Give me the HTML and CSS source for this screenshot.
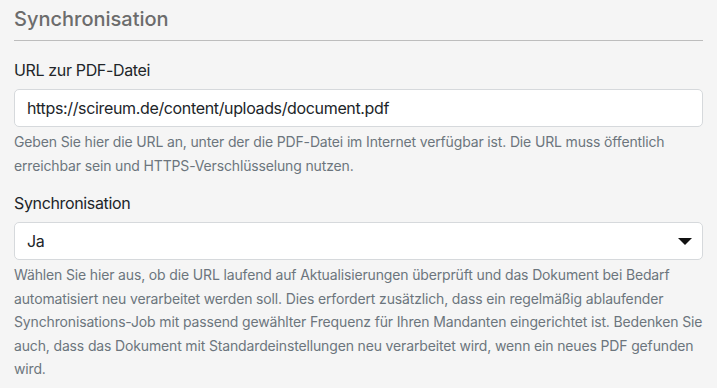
FILE: index.html
```html
<!DOCTYPE html>
<html lang="de">
<head>
    <meta charset="UTF-8">
    <meta name="viewport" content="width=device-width, initial-scale=1.0">
    <title>Synchronisation</title>
    <link rel="stylesheet" href="styles.css">
</head>
<body>
    <fieldset class="section">
        <legend class="section-title">Synchronisation</legend>

        <div class="field">
            <label class="field-label" for="pdf-url">URL zur PDF-Datei</label>
            <input class="field-input" id="pdf-url" type="text" value="https://scireum.de/content/uploads/document.pdf">
            <p class="field-help">Geben Sie hier die URL an, unter der die PDF-Datei im Internet verfügbar ist. Die URL muss öffentlich erreichbar sein und HTTPS-Verschlüsselung nutzen.</p>
        </div>

        <div class="field">
            <label class="field-label" for="sync">Synchronisation</label>
            <div class="select-wrap">
                <select class="field-input field-select" id="sync">
                    <option selected>Ja</option>
                    <option>Nein</option>
                </select>
                <svg class="select-arrow" width="14" height="8" viewBox="0 0 14 8" aria-hidden="true">
                    <path d="M0 0 H14 L7 7 Z" fill="#111"/>
                </svg>
            </div>
            <p class="field-help">Wählen Sie hier aus, ob die URL laufend auf Aktualisierungen überprüft und das Dokument bei Bedarf automatisiert neu verarbeitet werden soll. Dies erfordert zusätzlich, dass ein regelmäßig ablaufender Synchronisations-Job mit passend gewählter Frequenz für Ihren Mandanten eingerichtet ist. Bedenken Sie auch, dass das Dokument mit Standardeinstellungen neu verarbeitet wird, wenn ein neues PDF gefunden wird.</p>
        </div>
    </fieldset>
</body>
</html>
```

FILE: styles.css
```css
body {
    margin: 0;
    padding: 0 14px;
    background-color: #f5f5f5;
    font-family: Inter, "Noto Sans", sans-serif;
    color: #212529;
}
.section {
    border: none;
    margin: 0;
    padding: 0;
    min-width: 0;
}
.section-title {
    display: block;
    width: 100%;
    padding: 7px 0 9px;
    margin-bottom: 17px;
    font-size: 20px;
    line-height: 24px;
    font-weight: 500;
    color: #6c6c6c;
    border-bottom: 1px solid #bdbdbd;
}
.field {
    margin-bottom: 14px;
}
.field-label {
    display: block;
    font-size: 16px;
    line-height: 24px;
    letter-spacing: -0.35px;
    margin-bottom: 7px;
}
.field-input {
    display: block;
    width: 100%;
    box-sizing: border-box;
    height: 38px;
    padding: 6px 12px;
    font-family: inherit;
    font-size: 16px;
    letter-spacing: -0.35px;
    color: #212529;
    background-color: #fff;
    border: 1px solid #d6d9dc;
    border-radius: 5px;
    outline: none;
}
.select-wrap {
    position: relative;
}
.field-select {
    appearance: none;
    -webkit-appearance: none;
}
.select-arrow {
    position: absolute;
    right: 11px;
    top: 16px;
    pointer-events: none;
}
.field-help {
    margin: 3px 0 0;
    font-size: 14px;
    line-height: 23.5px;
    letter-spacing: -0.15px;
    color: #6c757d;
}
```
